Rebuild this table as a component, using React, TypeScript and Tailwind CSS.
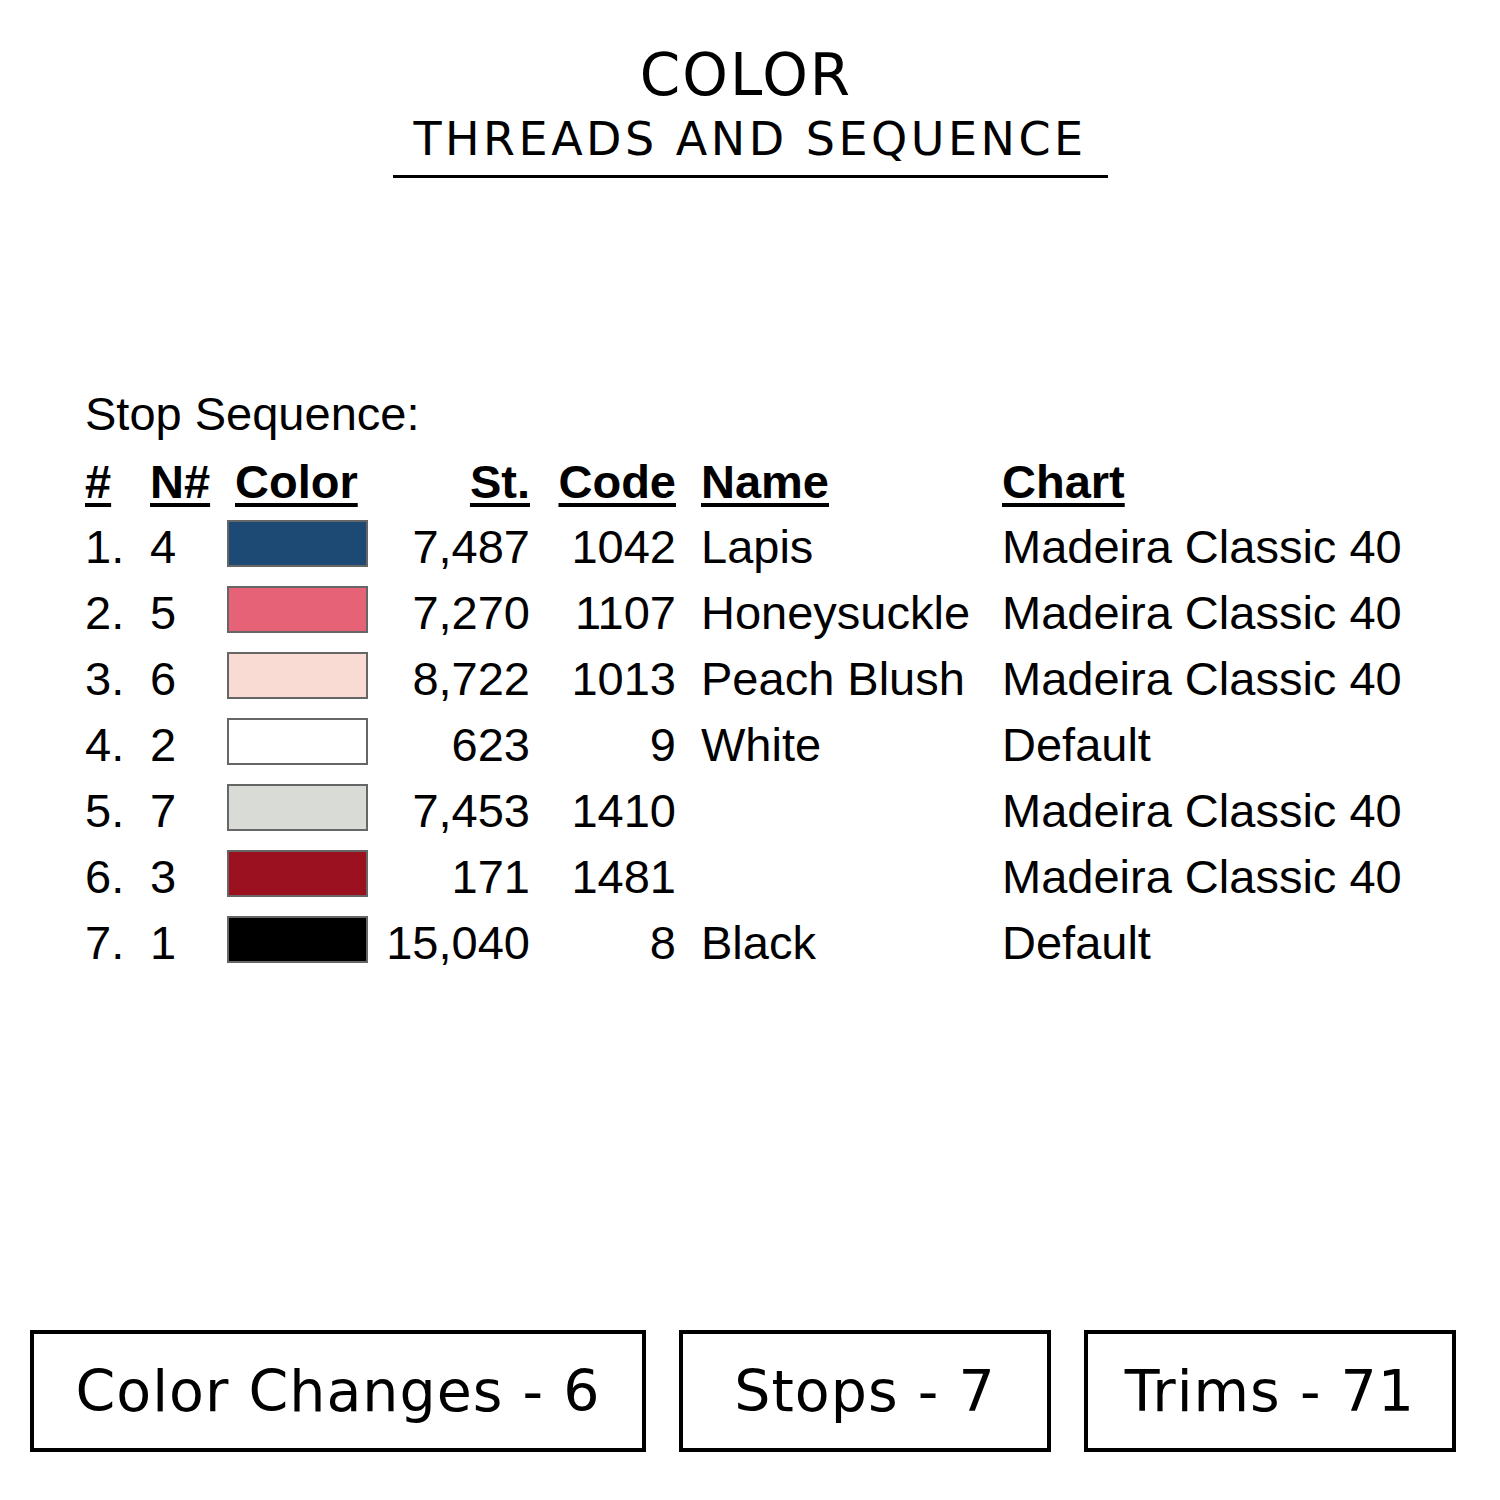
import React from "react";

type Stop = {
  n: string;
  needle: string;
  swatch: string;
  stitches: string;
  code: string;
  name: string;
  chart: string;
};

const stops: Stop[] = [
  { n: "1.", needle: "4", swatch: "bg-[#1d4a75]", stitches: "7,487", code: "1042", name: "Lapis", chart: "Madeira Classic 40" },
  { n: "2.", needle: "5", swatch: "bg-[#e66377]", stitches: "7,270", code: "1107", name: "Honeysuckle", chart: "Madeira Classic 40" },
  { n: "3.", needle: "6", swatch: "bg-[#f9dbd3]", stitches: "8,722", code: "1013", name: "Peach Blush", chart: "Madeira Classic 40" },
  { n: "4.", needle: "2", swatch: "bg-white", stitches: "623", code: "9", name: "White", chart: "Default" },
  { n: "5.", needle: "7", swatch: "bg-[#d9dcd6]", stitches: "7,453", code: "1410", name: "", chart: "Madeira Classic 40" },
  { n: "6.", needle: "3", swatch: "bg-[#9b1120]", stitches: "171", code: "1481", name: "", chart: "Madeira Classic 40" },
  { n: "7.", needle: "1", swatch: "bg-black", stitches: "15,040", code: "8", name: "Black", chart: "Default" },
];

const cols = "grid grid-cols-[65px_77px_141px_162px_146px_326px_1fr]";
const head = "font-bold underline decoration-[4px] underline-offset-[5px]";

function StatBox({ label, width }: { label: string; width: string }) {
  return (
    <div className={`${width} h-[122px] border-[4px] border-black flex items-center justify-center`}>
      <span className="text-[57px] leading-none tracking-[1px] text-black whitespace-nowrap">{label}</span>
    </div>
  );
}

export default function App() {
  return (
    <div className="w-[1500px] h-[1500px] bg-white flex flex-col text-black [font-family:'DejaVu_Sans',sans-serif]">
      {/* title */}
      <div className="pt-[46px] flex flex-col items-center">
        <div className="text-[58px] leading-[58px] tracking-[2px] pr-[8px]">COLOR</div>
        <div className="mt-[12px] w-[715px] border-b-[3px] border-black pb-[13px] text-center text-[46px] leading-[46px] tracking-[3.5px]">
          THREADS AND SEQUENCE
        </div>
      </div>

      {/* stop sequence table */}
      <div className="mt-[203px] pl-[85px] text-[47px] [font-family:'Liberation_Sans',Arial,sans-serif]">
        <div className="h-[68px] leading-[66px]">Stop Sequence:</div>
        <div className={`${cols} h-[65px] leading-[66px]`}>
          <span className={head}>#</span>
          <span className={head}>N#</span>
          <span className={`${head} pl-[8px]`}>Color</span>
          <span className={`${head} text-right`}>St.</span>
          <span className={`${head} text-right`}>Code</span>
          <span className={`${head} pl-[25px]`}>Name</span>
          <span className={head}>Chart</span>
        </div>
        {stops.map((s) => (
          <div key={s.n} className={`${cols} h-[66px] leading-[66px]`}>
            <span>{s.n}</span>
            <span>{s.needle}</span>
            <span className="pt-[6px]">
              <div className={`${s.swatch} h-[47px] w-[141px] border-2 border-[#666]`} />
            </span>
            <span className="text-right">{s.stitches}</span>
            <span className="text-right">{s.code}</span>
            <span className="pl-[25px] whitespace-nowrap">{s.name}</span>
            <span className="whitespace-nowrap">{s.chart}</span>
          </div>
        ))}
      </div>

      {/* totals */}
      <div className="mt-auto mb-[48px] flex gap-[33px] pl-[30px]">
        <StatBox label="Color Changes - 6" width="w-[616px]" />
        <StatBox label="Stops - 7" width="w-[372px]" />
        <StatBox label="Trims - 71" width="w-[372px]" />
      </div>
    </div>
  );
}
